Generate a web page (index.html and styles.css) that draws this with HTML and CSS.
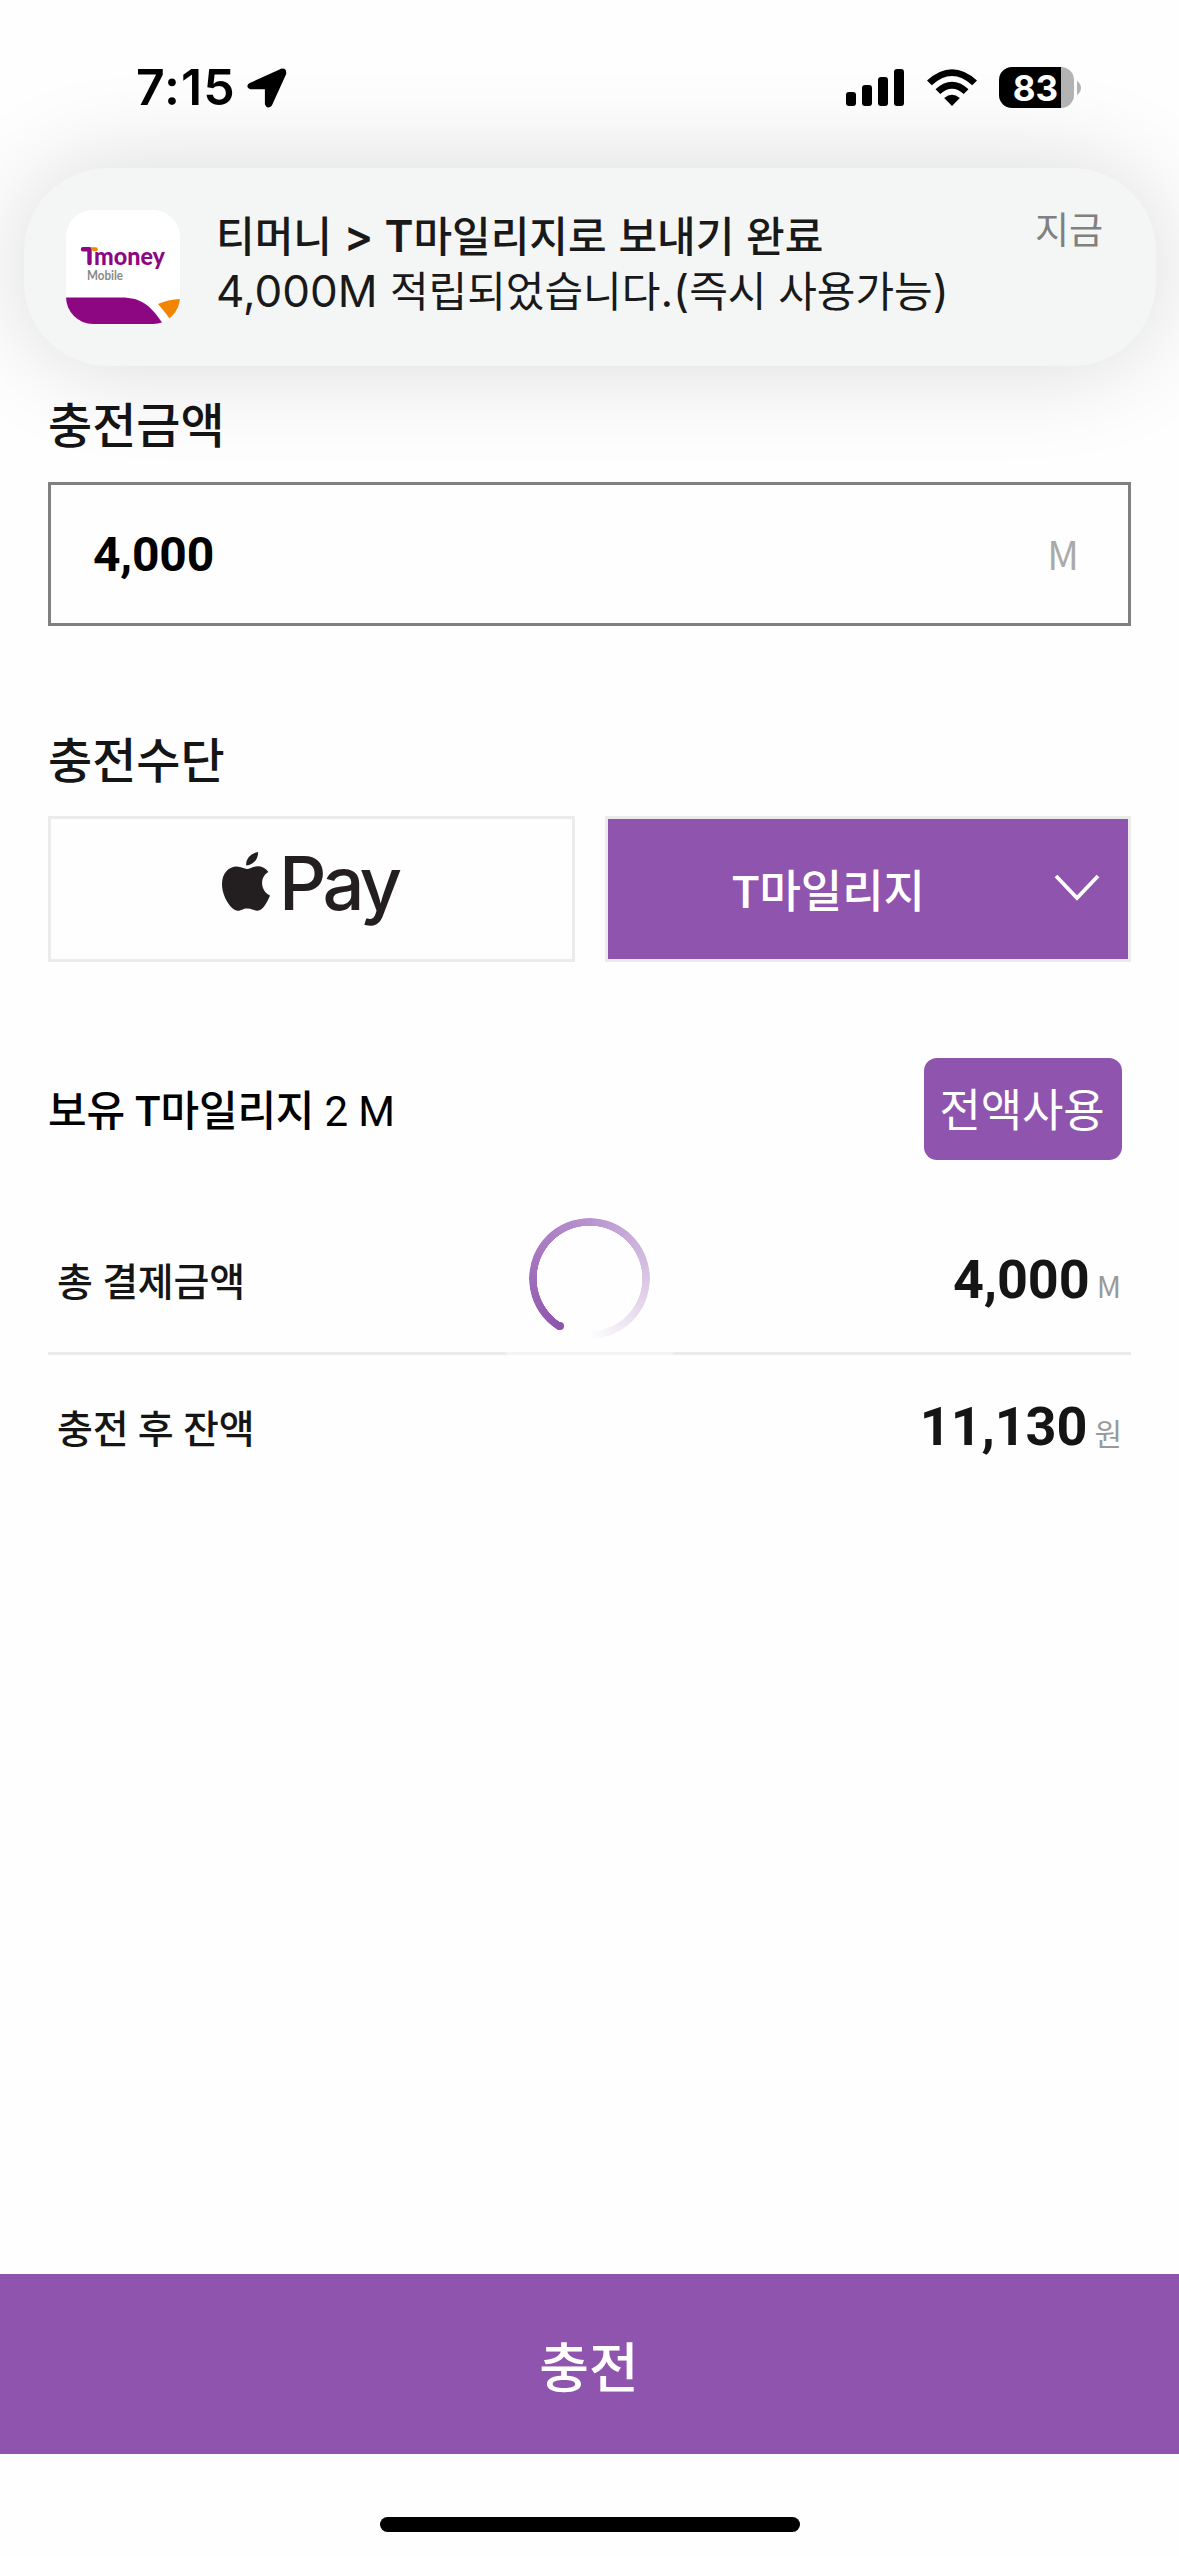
FILE: index.html
```html
<!DOCTYPE html>
<html lang="ko">
<head>
<meta charset="utf-8">
<title>충전</title>
<link rel="stylesheet" href="styles.css">
</head>
<body>
<div class="phone">
  <header class="status">
    <div class="status-left">
      <span class="time">7:15</span>
      <svg class="arrow" viewBox="0 0 40 40" width="42" height="42"><path d="M33.6 3.2 4.2 16.6 Q1.2 18.5 4.5 19.8 H19.5 V35.2 Q20.8 38.6 23.4 35.8 L36.8 6.2 Q37.2 2 33.6 3.2Z" stroke="#000" stroke-width="3" stroke-linejoin="round"/></svg>
    </div>
    <div class="status-right">
      <svg viewBox="0 0 58 37" width="58" height="37"><rect y="23" width="10" height="14" rx="3"/><rect x="16" y="16" width="10" height="21" rx="3"/><rect x="32" y="8" width="10" height="29" rx="3"/><rect x="48" width="10" height="37" rx="3"/></svg>
      <svg class="wifi" viewBox="0 0 52 37" width="52" height="37"><path d="M1 11.5Q26-11 51 11.5L46.2 16.2Q26-2.2 5.8 16.2Z"/><path d="M9.500 20.300Q26 5.400 42.500 20.300L37.700 25Q26 14.600 14.300 25Z"/><path d="M18.200 28.900Q26 22.600 33.800 28.900L26 37Z"/></svg>
      <div class="battery"><span>83</span></div>
      <svg class="nub" viewBox="0 0 4 14" width="4" height="14"><path d="M0 0Q4 3 4 7T0 14Z" fill="#b3b3b3"/></svg>
    </div>
  </header>

  <main class="content">
    <h2 class="label">충전금액</h2>
    <div class="amount"><strong>4,000</strong><span>M</span></div>
    <h2 class="label label-method">충전수단</h2>
    <div class="methods">
      <div class="method apple">
        <svg viewBox="0 0 48 59" width="48" height="59"><path d="M36.1 0C36.5 7.4 30.8 13.3 24.2 13.6 23.4 6.5 29.5.7 36.1 0Z"/><path d="M24.8 17C28 17 30.6 14.3 35.7 14.3 39.8 14.3 43.9 16.3 46.4 20 37 25.2 38.6 39.4 48 43.4 45.8 49 40.9 58.7 35.5 58.7 31.8 58.7 30.2 56.4 25.5 56.4 20.7 56.4 19.1 58.7 15.7 58.7 9.2 58.7 0 44.4 0 32.3 0 20.6 7.3 14.5 14.6 14.5 19.1 14.5 22.7 17 24.8 17Z"/></svg>
        <span>Pay</span>
      </div>
      <div class="method mileage">
        <span>T마일리지</span>
        <svg viewBox="0 0 46 28" width="46" height="28"><path d="M2 3 23 25 44 3" fill="none" stroke="#fff" stroke-width="3.8"/></svg>
      </div>
    </div>
    <div class="holding">
      <p>보유 T마일리지 <span>2 M</span></p>
      <div class="use-all">전액사용</div>
    </div>
    <div class="row row-total"><span class="row-name">총 결제금액</span><span class="row-value"><b>4,000</b><i>M</i></span></div>
    <div class="row row-after"><span class="row-name">충전 후 잔액</span><span class="row-value"><b>11,130</b><i>원</i></span></div>
  </main>

  <div class="submit">충전</div>
  <footer class="home"><div class="home-bar"></div></footer>

  <div class="spinner"><div class="ring"></div><div class="ring-cap"></div></div>

  <aside class="notice">
    <svg class="app-icon" viewBox="0 0 114 114" width="114" height="114">
      <defs><clipPath id="tile"><rect width="114" height="114" rx="27"/></clipPath></defs>
      <g clip-path="url(#tile)">
        <rect width="114" height="114" fill="#fff"/>
        <path d="M0 87.500H55C76 87.500 85 96 97 114H0Z" fill="#8e0782"/>
        <path d="M92 94Q102 89.500 114 89V114H107Q101 104 92 94Z" fill="#f28500"/>
      </g>
      <path d="M17 39.200H23.500V53" fill="none" stroke="#8e0782" stroke-width="4.4" stroke-linecap="round" stroke-linejoin="round"/>
      <path d="M24.500 37.200H29.800Q31.800 37.200 31.800 39.200T29.800 41.200H27Z" fill="#f28500"/>
      <text x="28" y="55" class="brand" textLength="71" lengthAdjust="spacingAndGlyphs">money</text>
      <text x="21" y="70" class="brand-sub" textLength="36" lengthAdjust="spacingAndGlyphs">Mobile</text>
    </svg>
    <div class="notice-text">
      <div class="notice-title">티머니 <span>&gt; T</span>마일리지로 보내기 완료</div>
      <div class="notice-body"><span>4,000M </span>적립되었습니다<span>.(</span>즉시 사용가능<span>)</span></div>
    </div>
    <div class="notice-time">지금</div>
  </aside>
</div>
</body>
</html>
```
FILE: styles.css
```css
* { box-sizing: border-box; margin: 0; padding: 0; }

body {
  background: #fefefe;
  color: #151515;
  font-family: Roboto, "Noto Sans CJK KR", sans-serif;
}

svg { display: block; flex: none; }

.phone {
  position: relative;
  display: flex;
  flex-direction: column;
  width: 1179px;
  height: 2556px;
  overflow: hidden;
}

.status, .spinner { z-index: 2; }

.status {
  display: flex;
  justify-content: space-between;
  height: 168px;
  padding: 67px 98px 0 136px;
  color: #000;
  font-family: Inter, sans-serif;
}

.status-left, .status-right { display: flex; height: 41px; align-items: center; }
.time { font-size: 50px; font-weight: 600; line-height: 43px; letter-spacing: 1px; }
.arrow { margin-left: 10px; }
.wifi { margin: 0 21px 0 22px; }

.battery {
  width: 75px;
  height: 41px;
  padding-right: 2px;
  border-radius: 13px;
  background: linear-gradient(90deg, #000 62px, #b3b3b3 62px);
  color: #fff;
  font-size: 35px;
  font-weight: 700;
  line-height: 42px;
  text-align: center;
}

.nub { margin-left: 3px; }

.content {
  display: flex;
  flex-direction: column;
  flex: 1;
  padding: 229px 48px 0;
}

.label {
  height: 60px;
  font-size: 48px;
  font-weight: 500;
  line-height: 60px;
}

.amount {
  display: flex;
  align-items: center;
  justify-content: space-between;
  height: 144px;
  margin-top: 25px;
  padding: 0 49px 0 42px;
  border: 3px solid #808080;
  color: #000;
}

.amount strong { padding-top: 1px; font-size: 48px; font-weight: 700; line-height: 60px; letter-spacing: -0.2px; }
.amount span { padding-bottom: 2px; color: #aaa; font-family: "Noto Sans CJK KR", sans-serif; font-size: 39px; line-height: 60px; }

.label-method { margin-top: 106px; }

.methods {
  display: grid;
  grid-template-columns: 527px 526px;
  justify-content: space-between;
  height: 146px;
  margin-top: 24px;
}

.method {
  display: flex;
  align-items: center;
  border: 3px solid #ebebeb;
}

.apple { padding: 0 0 24px 171px; fill: #231f20; color: #231f20; }
.apple svg { margin-top: 8px; }
.apple span {
  margin: 12px 0 0 9px;
  font-family: Inter, sans-serif;
  font-size: 74px;
  font-weight: 450;
  line-height: 80px;
  letter-spacing: -3.7px;
}

.mileage {
  justify-content: space-between;
  padding: 0 28px 2px 124px;
  background: #8f54ad;
  color: #fff;
  font-size: 45px;
  font-weight: 500;
}

.mileage svg { margin-bottom: 2px; }

.holding {
  display: flex;
  align-items: center;
  justify-content: space-between;
  height: 102px;
  margin-top: 96px;
  padding-right: 9px;
  color: #000;
  font-size: 42px;
  font-weight: 500;
  letter-spacing: -0.2px;
}

.holding p { padding-bottom: 3px; }
.holding span { font-weight: 400; }

.use-all {
  width: 198px;
  height: 102px;
  padding-right: 2px;
  border-radius: 13px;
  background: #8f54ad;
  color: #fff;
  font-size: 45px;
  font-weight: 400;
  line-height: 107px;
  text-align: center;
}

.row {
  display: flex;
  justify-content: space-between;
  height: 147px;
  padding: 0 9px;
}

.row-total { height: 195px; padding: 48px 10px 0 9px; border-bottom: 3px solid #ebebeb; }
.row-name { font-size: 39px; font-weight: 500; line-height: 150px; letter-spacing: -0.2px; }
.row-value { display: flex; align-items: baseline; line-height: 144px; }
.row-value b { font-size: 54px; font-weight: 700; letter-spacing: -0.1px; }
.row-value i {
  margin-left: 7px;
  color: #999;
  font-family: "Noto Sans CJK KR", sans-serif;
  font-size: 30px;
  font-style: normal;
}

.submit {
  height: 180px;
  padding-right: 1px;
  background: #8f54ad;
  color: #fff;
  font-size: 54px;
  font-weight: 500;
  line-height: 192px;
  text-align: center;
}

.home { display: flex; justify-content: center; height: 102px; padding-top: 63px; }
.home-bar { width: 420px; height: 15px; border-radius: 8px; background: #000; }

.spinner {
  position: absolute;
  left: 501px;
  top: 1190px;
  width: 177px;
  height: 177px;
  padding: 28px;
  border-radius: 30px;
  background: rgba(254, 254, 254, 0.5);
}

.ring {
  width: 121px;
  height: 121px;
  border-radius: 50%;
  background: conic-gradient(from 180deg, transparent 31deg, #8f54ad 31deg, #b893cf 180deg, #d9c6e4 270deg, #fefefe 360deg);
  -webkit-mask: radial-gradient(circle, transparent 52.5px, #000 53px);
  mask: radial-gradient(circle, transparent 52.5px, #000 53px);
}

.ring-cap {
  position: absolute;
  left: 55px;
  top: 132px;
  width: 8px;
  height: 8px;
  border-radius: 50%;
  background: #8f54ad;
}

.notice {
  position: absolute;
  left: 24px;
  top: 168px;
  display: flex;
  width: 1132px;
  height: 198px;
  padding: 39px 53px 0 42px;
  border-radius: 84px;
  background: #f4f6f5;
  box-shadow: 0 0 100px rgba(0, 0, 0, 0.15);
  color: #191919;
}

.app-icon { margin-top: 3px; }

.notice-text {
  flex: 1;
  padding: 0 0 0 36px;
  font-family: "Noto Sans CJK KR", sans-serif;
  font-size: 42px;
  white-space: nowrap;
}

.notice-text span { font-family: Inter, sans-serif; font-size: 44px; line-height: 1; }
.notice-title { height: 55px; font-weight: 500; line-height: 54px; }
.notice-title span { font-weight: 600; }
.notice-body { height: 54px; line-height: 54px; }
.notice-time { height: 43px; padding-top: 2px; color: #808080; font-family: "Noto Sans CJK KR", sans-serif; font-size: 37px; line-height: 38px; }

.brand { fill: #8e0782; font-family: Lato, sans-serif; font-size: 24px; font-weight: 900; }
.brand-sub { fill: #888; font-family: Lato, sans-serif; font-size: 13px; font-weight: 700; }
```
